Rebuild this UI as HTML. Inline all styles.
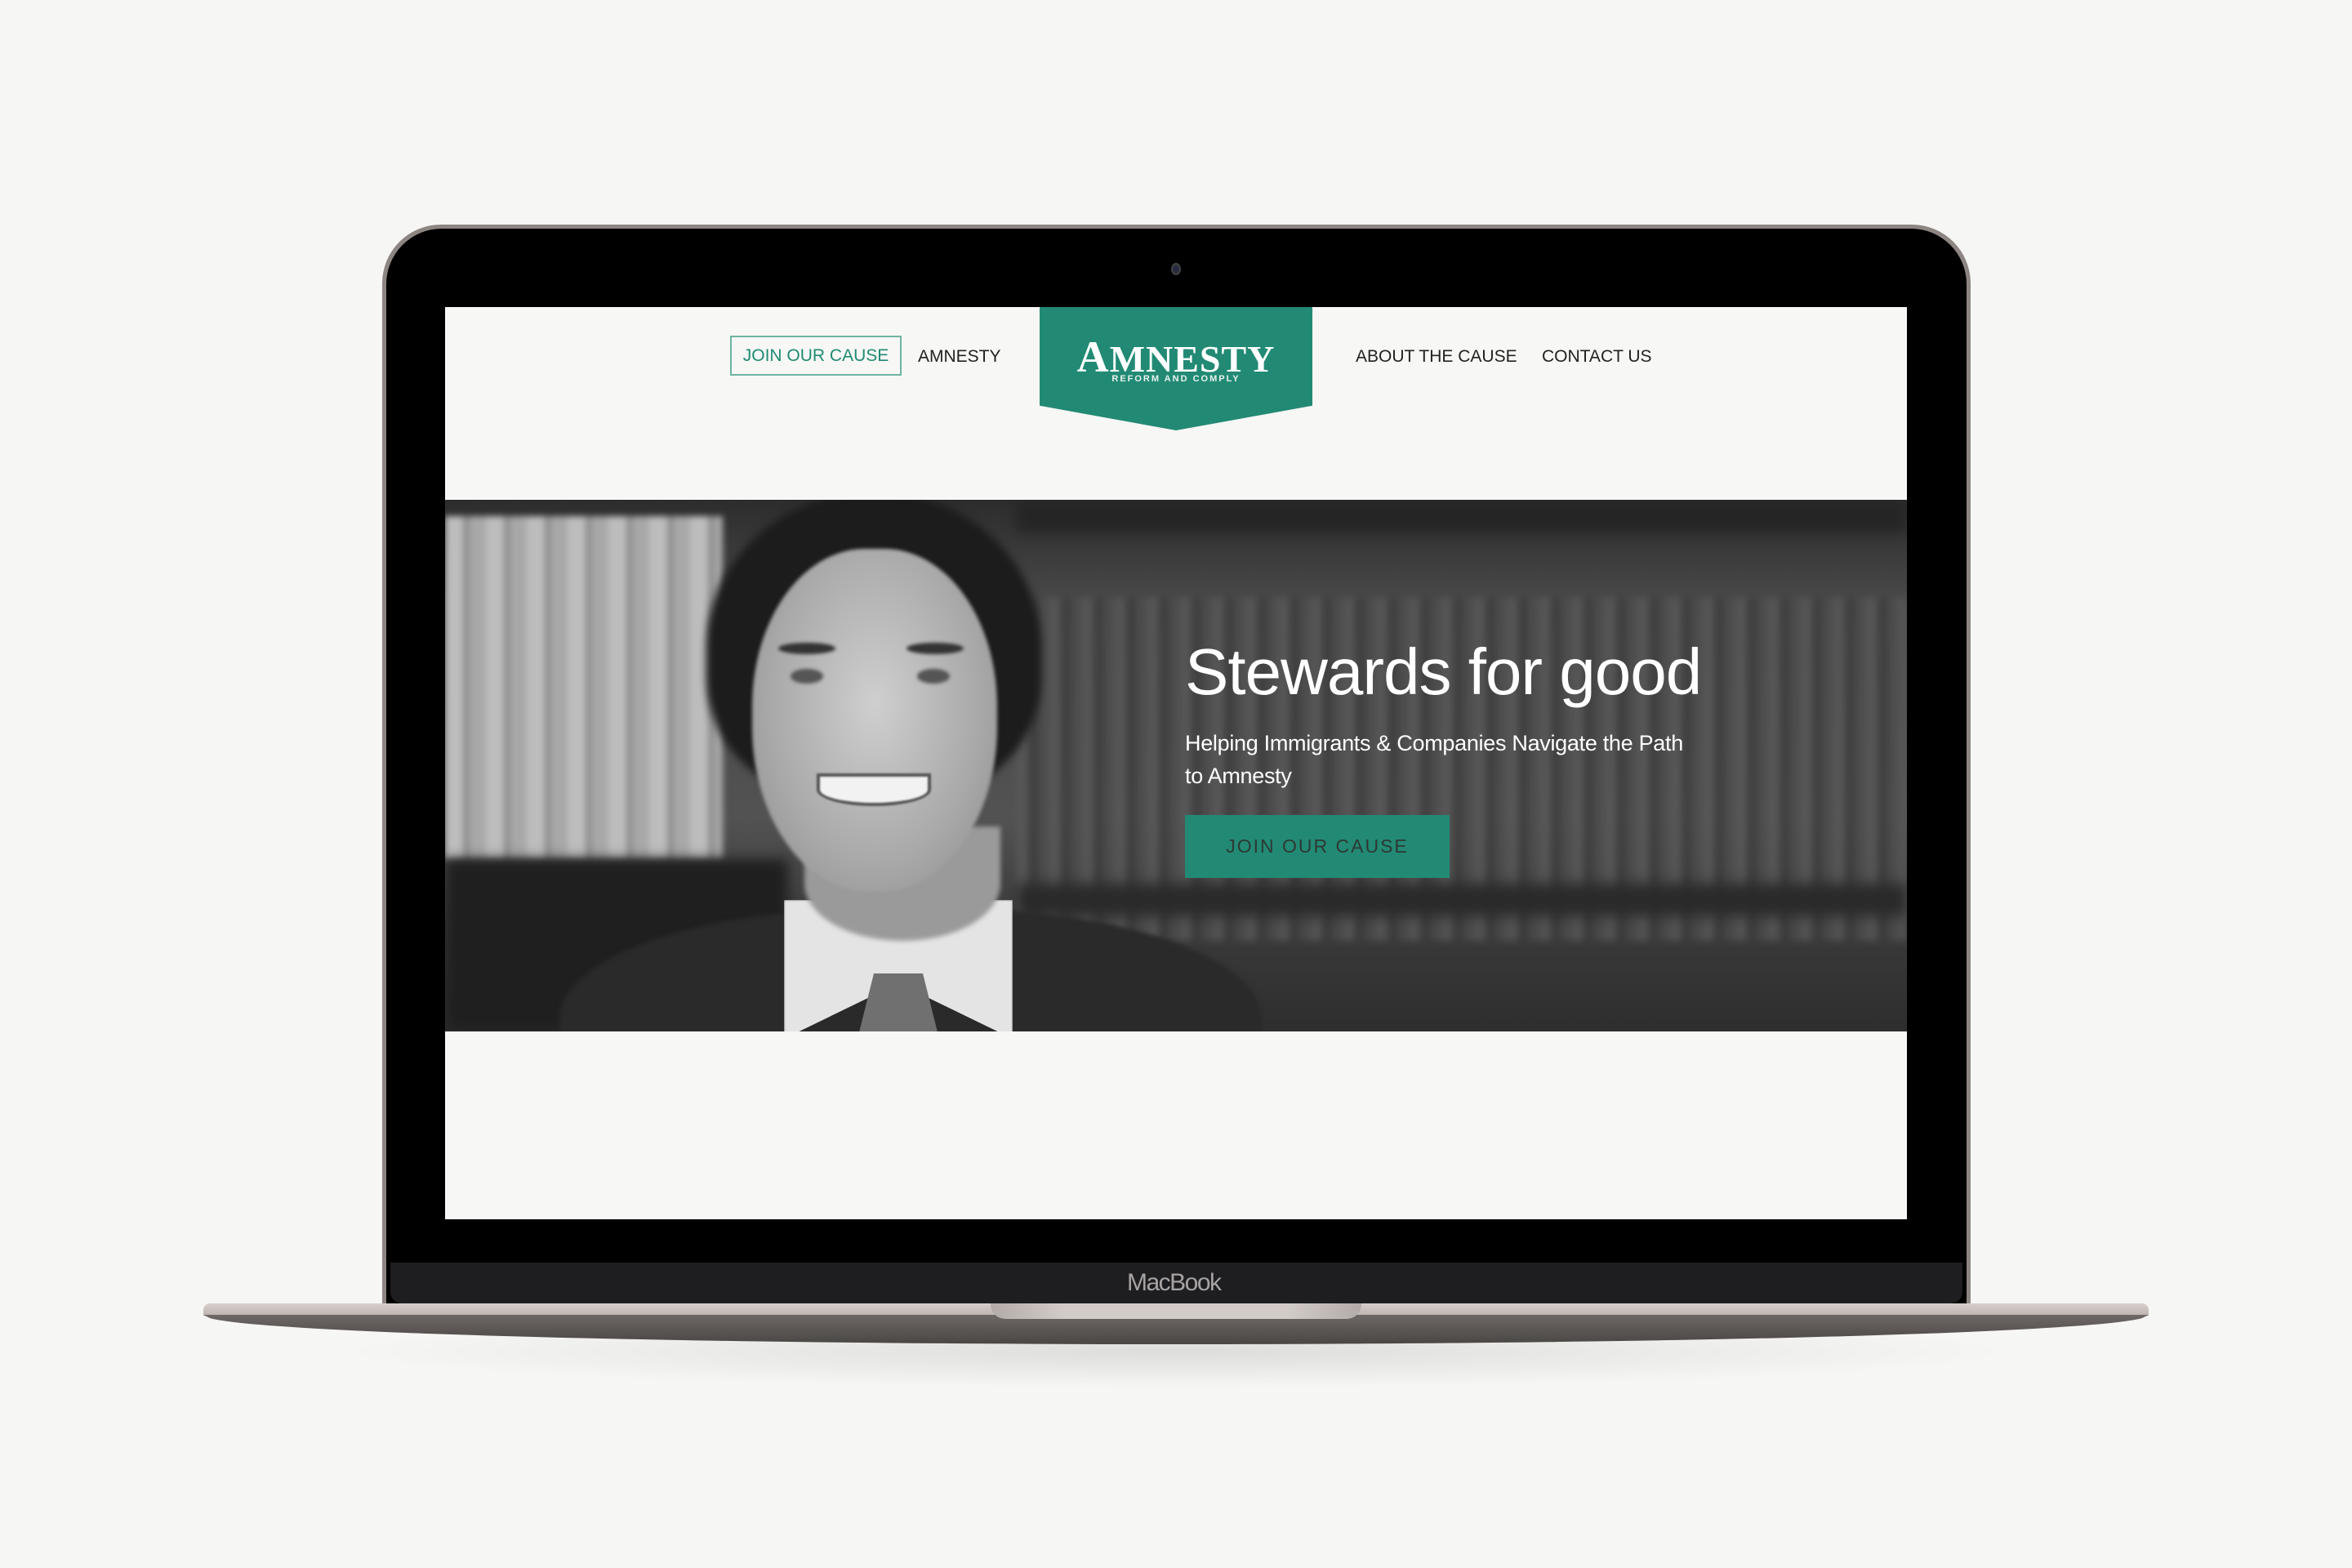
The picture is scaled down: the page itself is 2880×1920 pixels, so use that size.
<!DOCTYPE html>
<html><head><meta charset="utf-8">
<style>
*{margin:0;padding:0;box-sizing:border-box}
html,body{width:2880px;height:1920px;overflow:hidden;background:#f6f6f5;font-family:"Liberation Sans",sans-serif}
.abs{position:absolute}
#shadow{left:400px;top:1610px;width:2080px;height:90px;border-radius:50%;background:radial-gradient(ellipse at center,rgba(0,0,0,.10),rgba(0,0,0,0) 70%)}
#lid{left:468px;top:275px;width:1945px;height:1325px;border-radius:72px 72px 0 0;background:#8c8582;padding:5px 5px 0 5px}
#lidin{width:100%;height:100%;border-radius:68px 68px 0 0;background:#000}
#chin{left:478px;top:1546px;width:1925px;height:50px;background:#1e1d20;border-radius:0 0 14px 14px}
#mb{left:1380px;top:1554px;font-size:30px;color:#a8a4a4;letter-spacing:-1.5px}
#cam{left:1434px;top:322px;width:12px;height:15px;border-radius:50%;background:#2a2a40;border:2px solid #444}
#screen{left:545px;top:376px;width:1790px;height:1117px;background:#f7f7f5;overflow:hidden}
#base1{left:249px;top:1596px;width:2382px;height:15px;background:linear-gradient(#d6cfcb,#bdb4b0);border-radius:8px 8px 0 0}
#base2{left:249px;top:1610px;width:2382px;height:36px;background:linear-gradient(#6e6865,#4a4644);border-radius:0 0 50% 50%/0 0 100% 100%;clip-path:polygon(0 0,100% 0,97% 100%,3% 100%)}
#notch{left:1213px;top:1596px;width:454px;height:19px;background:linear-gradient(90deg,#b3aba7,#d2cbc7 20%,#d2cbc7 80%,#b3aba7);border-radius:0 0 18px 18px}
#join{left:349px;top:35px;width:210px;height:49px;border:2px solid #6fb3a2;color:#1f8b73;font-size:21px;display:flex;align-items:center;justify-content:center}
#logo{left:728px;top:0;width:334px;height:151px;background:#228a74;clip-path:polygon(0 0,100% 0,100% 80%,50% 100%,0 80%)}
#hero{left:0;top:236px;width:1790px;height:651px;background:#3b3b3b;overflow:hidden}
</style></head><body>
<div class="abs" id="shadow"></div>
<div class="abs" id="lid"><div id="lidin"></div></div>
<div class="abs" id="cam"></div>
<div class="abs" id="chin"></div>
<div class="abs" id="mb">MacBook</div>
<div class="abs" id="base1"></div>
<div class="abs" id="base2"></div>
<div class="abs" id="notch"></div>

<div class="abs" id="screen">
  <div class="abs" id="join">JOIN OUR CAUSE</div>
  <div class="abs" style="left:579px;top:49px;font-size:21px;color:#222">AMNESTY</div>
  <div class="abs" style="left:1115px;top:49px;font-size:21px;color:#222">ABOUT THE CAUSE</div>
  <div class="abs" style="left:1343px;top:49px;font-size:21px;color:#222">CONTACT US</div>
  <div class="abs" id="logo">
    <div class="abs" style="left:42px;top:30px;width:250px;text-align:center;font-family:'Liberation Serif',serif;font-weight:bold;color:#fff;font-size:46px;letter-spacing:1px;white-space:nowrap"><span style="font-size:54px">A</span>MNESTY</div>
    <div class="abs" style="left:0;top:82px;width:334px;text-align:center;color:#e8f2ef;font-size:11px;font-weight:bold;letter-spacing:2px">REFORM AND COMPLY</div>
  </div>
  <div class="abs" id="hero">
    <div class="abs" style="left:0;top:0;width:1790px;height:651px;background:linear-gradient(#2c2c2c,#4a4a4a 20%,#525252 60%,#3a3a3a 80%,#2e2e2e)"></div>
    <div class="abs" style="left:700px;top:120px;width:1090px;height:420px;background:repeating-linear-gradient(90deg,#5a5a5a 0 14px,#3a3a3a 14px 26px,#4d4d4d 26px 40px);filter:blur(5px);opacity:.8"></div>
    <div class="abs" style="left:700px;top:0;width:1090px;height:40px;background:#252525;filter:blur(8px)"></div>
    <div class="abs" style="left:700px;top:470px;width:1090px;height:40px;background:#2a2a2a;filter:blur(8px)"></div>
    <div class="abs" style="left:0;top:20px;width:340px;height:420px;background:repeating-linear-gradient(90deg,#bdbdbd 0 22px,#8f8f8f 22px 30px,#a8a8a8 30px 50px);filter:blur(4px)"></div>
    <div class="abs" style="left:0;top:440px;width:420px;height:211px;background:#1f1f1f;filter:blur(8px)"></div>
    <div class="abs" style="left:140px;top:500px;width:860px;height:300px;background:#2a2a2a;border-radius:45% 45% 0 0;filter:blur(3px)"></div>
    <div class="abs" style="left:415px;top:490px;width:280px;height:170px;background:#e4e4e4;clip-path:polygon(0 0,100% 0,100% 100%,50% 60%,0 100%);filter:blur(1px)"></div>
    <div class="abs" style="left:505px;top:580px;width:100px;height:80px;background:#707070;clip-path:polygon(20% 0,80% 0,100% 100%,0 100%)"></div>
    <div class="abs" style="left:440px;top:400px;width:240px;height:140px;background:#9a9a9a;border-radius:0 0 50% 50%;filter:blur(3px)"></div>
    <div class="abs" style="left:320px;top:-10px;width:410px;height:380px;background:#1c1c1c;border-radius:50% 50% 40% 40%;filter:blur(5px)"></div>
    <div class="abs" style="left:376px;top:60px;width:300px;height:420px;background:radial-gradient(ellipse at 50% 45%,#cfcfcf,#a9a9a9 60%,#8a8a8a);border-radius:46% 46% 48% 48%;filter:blur(2px)"></div>
    <div class="abs" style="left:408px;top:175px;width:70px;height:14px;background:#333;border-radius:50%;filter:blur(2px)"></div>
    <div class="abs" style="left:565px;top:175px;width:70px;height:14px;background:#333;border-radius:50%;filter:blur(2px)"></div>
    <div class="abs" style="left:423px;top:207px;width:40px;height:18px;background:#555;border-radius:50%;filter:blur(2px)"></div>
    <div class="abs" style="left:578px;top:207px;width:40px;height:18px;background:#555;border-radius:50%;filter:blur(2px)"></div>
    <div class="abs" style="left:455px;top:335px;width:140px;height:40px;background:#f2f2f2;border-radius:0 0 50% 50%;border:4px solid #555;filter:blur(1px)"></div>
    <div class="abs" style="left:906px;top:165px;font-size:80px;color:#fff;white-space:nowrap;letter-spacing:-1px">Stewards for good</div>
    <div class="abs" style="left:906px;top:278px;font-size:27px;line-height:40px;color:#fff;width:700px;letter-spacing:-.3px;white-space:nowrap">Helping Immigrants &amp; Companies Navigate the Path<br>to Amnesty</div>
    <div class="abs" style="left:906px;top:386px;width:324px;height:77px;background:#228a74;color:#2d3834;font-size:23px;letter-spacing:2px;display:flex;align-items:center;justify-content:center">JOIN OUR CAUSE</div>
  </div>
</div>
</body></html>
